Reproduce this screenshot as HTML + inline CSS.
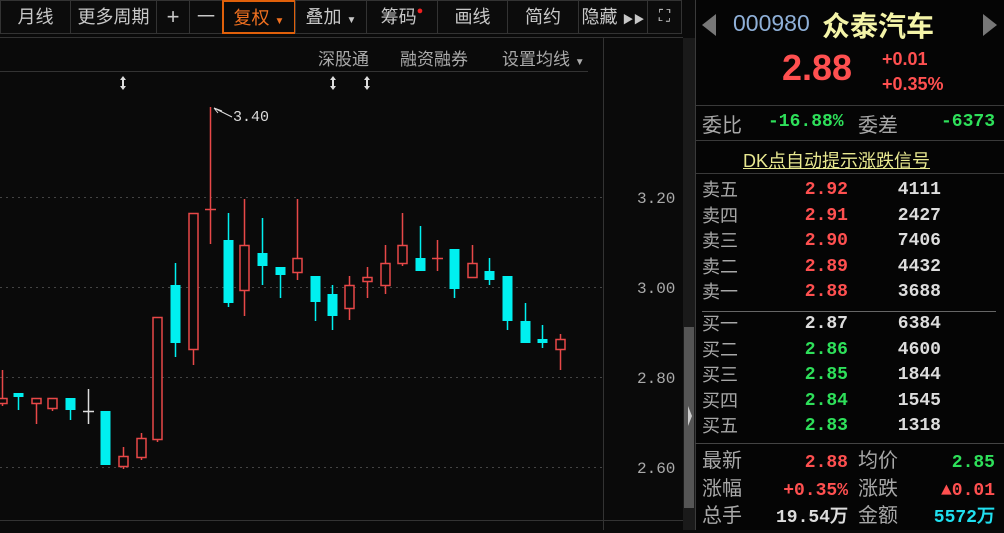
<!DOCTYPE html>
<html><head><meta charset="utf-8"><style>
*{margin:0;padding:0;box-sizing:border-box}
body{width:1004px;height:530px;background:#0a0a0a;overflow:hidden;position:relative;font-family:"Liberation Sans","Noto Sans CJK SC",sans-serif;color:#bbb}
.tb{position:absolute;top:0;height:34px;border:1px solid #333;background:#0c0c0c;color:#c8c8c8;font-size:18px;line-height:32px;text-align:center}
.a{position:absolute;white-space:nowrap}
.lab{color:#a8a8a8;font-size:18px}
.num{font-weight:bold;font-size:18px;text-align:right;font-family:"Liberation Mono","DejaVu Sans Mono",monospace}
.r{color:#ff5050}.g{color:#2ee05a}.w{color:#ddd}
.hl{position:absolute;height:1px;background:#3a3a3a}
</style></head><body>
<div class="tb" style="left:0;width:71px">月线</div>
<div class="tb" style="left:70px;width:87px">更多周期</div>
<div class="tb" style="left:156px;width:34px;font-size:22px">+</div>
<div class="tb" style="left:189px;width:34px">一</div>
<div class="tb" style="left:222px;width:74px;border:2px solid #e0600a;color:#f07020;background:#0a0a0a">复权 <span style="font-size:10px">▼</span></div>
<div class="tb" style="left:295px;width:72px">叠加 <span style="font-size:10px">▼</span></div>
<div class="tb" style="left:366px;width:72px">筹码<span style="color:#f02020;font-size:11px;vertical-align:top;position:relative;top:-6px">●</span></div>
<div class="tb" style="left:437px;width:71px">画线</div>
<div class="tb" style="left:507px;width:72px">简约</div>
<div class="tb" style="left:578px;width:70px">隐藏 <span style="font-size:11px">▶▶</span></div>
<div class="tb" style="left:647px;width:35px;font-size:16px">⛶</div>
<div class="a" style="left:318px;top:45px;font-size:17px;color:#aaa">深股通</div>
<div class="a" style="left:400px;top:45px;font-size:17px;color:#aaa">融资融券</div>
<div class="a" style="left:502px;top:45px;font-size:17px;color:#aaa">设置均线 <span style="font-size:10px">▼</span></div>
<svg class="a" style="left:0;top:0" width="695" height="530">
<line x1="0" y1="37.5" x2="683" y2="37.5" stroke="#333"/>
<line x1="0" y1="71.5" x2="588" y2="71.5" stroke="#333"/>
<line x1="603.5" y1="38" x2="603.5" y2="530" stroke="#333"/>
<line x1="0" y1="520.5" x2="683" y2="520.5" stroke="#333"/>
<g stroke="#444" stroke-dasharray="2 4">
<line x1="0" y1="197.5" x2="603" y2="197.5"/><line x1="0" y1="287.5" x2="603" y2="287.5"/><line x1="0" y1="377.5" x2="603" y2="377.5"/><line x1="0" y1="467.5" x2="603" y2="467.5"/></g>
<g fill="#aaa" font-family="Liberation Mono,monospace" font-size="16"><text x="637" y="203">3.20</text><text x="637" y="293">3.00</text><text x="637" y="383">2.80</text><text x="637" y="473">2.60</text></g>
<g fill="#ddd"><path d="M123 76 l-3 4 h6z M123 90 l-3 -4 h6z"/><rect x="122" y="79" width="2" height="8"/>
<path d="M333 76 l-3 4 h6z M333 90 l-3 -4 h6z"/><rect x="332" y="79" width="2" height="8"/>
<path d="M367 76 l-3 4 h6z M367 90 l-3 -4 h6z"/><rect x="366" y="79" width="2" height="8"/></g>
<text x="233" y="121" fill="#ddd" font-family="Liberation Mono,monospace" font-size="15">3.40</text>
<path d="M214 108 l8 3 M214 108 l4 5 M214 108 L232 117" stroke="#ddd" fill="none"/>
<rect x="683" y="38" width="12" height="492" fill="#1a1a1a"/>
<rect x="684" y="327" width="10" height="181" fill="#555"/>
<path d="M688 406 l4 10 l-4 10z" fill="#ccc"/>
<g id="c"></g>
</svg>
<div style="position:absolute;left:695px;top:0;width:309px;height:530px;border-left:1px solid #3a3a3a;background:#050505"></div>
<div class="hl" style="left:695px;top:105px;width:309px"></div>
<div class="hl" style="left:695px;top:140px;width:309px"></div>
<div class="hl" style="left:695px;top:173px;width:309px"></div>
<div class="hl" style="left:702px;top:311px;width:294px;background:#666"></div>
<div class="hl" style="left:695px;top:443px;width:309px;background:#444"></div>
<svg class="a" style="left:700px;top:12px" width="300" height="26"><path d="M16 2 L2 13 L16 24z" fill="#777"/><path d="M283 2 L297 13 L283 24z" fill="#777"/></svg>
<div class="a" style="left:733px;top:10px;font-size:23px;color:#8fb0d8">000980</div>
<div class="a" style="left:822px;top:5px;font-size:28px;font-weight:bold;color:#f4f4a8">众泰汽车</div>
<div class="a r" style="left:782px;top:47px;font-size:36px;font-weight:bold">2.88</div>
<div class="a r" style="left:882px;top:49px;font-size:18px;font-weight:bold">+0.01</div>
<div class="a r" style="left:882px;top:74px;font-size:18px;font-weight:bold">+0.35%</div>
<div class="a lab" style="left:702px;top:109px;font-size:20px">委比</div>
<div class="a g num" style="left:768px;top:112px">-16.88%</div>
<div class="a lab" style="left:858px;top:109px;font-size:20px">委差</div>
<div class="a g num" style="right:9px;top:112px">-6373</div>
<div class="a" style="left:743px;top:147px;font-size:18px;color:#e8e890;text-decoration:underline">DK点自动提示涨跌信号</div>
<div class="a lab" style="left:702px;top:178px;line-height:25.5px">卖五<br>卖四<br>卖三<br>卖二<br>卖一</div>
<div class="a num r" style="right:156px;top:178px;line-height:25.5px">2.92<br>2.91<br>2.90<br>2.89<br>2.88</div>
<div class="a num w" style="right:63px;top:178px;line-height:25.5px">4111<br>2427<br>7406<br>4432<br>3688</div>
<div class="a lab" style="left:702px;top:312px;line-height:25.5px">买一<br>买二<br>买三<br>买四<br>买五</div>
<div class="a num g" style="right:156px;top:312px;line-height:25.5px"><span class="w">2.87</span><br>2.86<br>2.85<br>2.84<br>2.83</div>
<div class="a num w" style="right:63px;top:312px;line-height:25.5px">6384<br>4600<br>1844<br>1545<br>1318</div>
<div class="a lab" style="left:702px;top:448px;line-height:27.5px;font-size:20px">最新<br>涨幅<br>总手</div>
<div class="a num" style="right:156px;top:450px;line-height:27.5px"><span class="r">2.88</span><br><span class="r">+0.35%</span><br><span class="w">19.54万</span></div>
<div class="a lab" style="left:858px;top:448px;line-height:27.5px;font-size:20px">均价<br>涨跌<br>金额</div>
<div class="a num" style="right:9px;top:450px;line-height:27.5px"><span class="g">2.85</span><br><span class="r">▲0.01</span><br><span style="color:#20e0f0">5572万</span></div>
<script>
var d=[
[2,'r',398,403,370,406],[18,'c',393,397,393,410],[36,'r',398,403,398,424],[52,'r',398,408,398,411],[70,'c',398,410,398,420],[88,'w',411,411,389,424],
[105,'c',411,465,411,465],[123,'r',456,466,447,469],[141,'r',438,457,433,460],[157,'r',317,439,317,442],[175,'c',285,343,263,357],[193,'r',213,349,213,365],
[210,'r',209,209,107,244],[228,'c',240,303,213,307],[244,'r',245,290,199,316],[262,'c',253,266,218,285],[280,'c',267,275,267,298],[297,'r',258,272,199,280],
[315,'c',276,302,276,321],[332,'c',294,316,285,330],[349,'r',285,308,276,320],[367,'r',277,281,267,298],[385,'r',263,285,245,294],[402,'r',245,263,213,266],
[420,'c',258,271,226,271],[437,'r',258,258,240,271],[454,'c',249,289,249,298],[472,'r',263,277,245,277],[489,'c',271,280,258,285],[507,'c',276,321,276,330],
[525,'c',321,343,303,343],[542,'c',339,343,325,348],[560,'r',339,349,334,370]];
var s='';d.forEach(function(k){var x=k[0],col=k[1]=='r'?'#e84848':k[1]=='c'?'#00f0f0':'#ddd';
s+='<line x1="'+(x+.5)+'" y1="'+k[4]+'" x2="'+(x+.5)+'" y2="'+k[5]+'" stroke="'+col+'" stroke-width="1.5"/>';
var h=k[3]-k[2];
if(h<1){s+='<line x1="'+(x-5)+'" y1="'+(k[2]+.5)+'" x2="'+(x+6)+'" y2="'+(k[2]+.5)+'" stroke="'+col+'" stroke-width="1.5"/>';}
else if(k[1]=='c'){s+='<rect x="'+(x-4.5)+'" y="'+k[2]+'" width="10" height="'+h+'" fill="'+col+'"/>';}
else{s+='<rect x="'+(x-4)+'" y="'+(k[2]+.5)+'" width="9" height="'+h+'" fill="#0a0a0a" stroke="'+col+'" stroke-width="1.5"/>';}});
document.getElementById('c').innerHTML=s;
</script>
</body></html>
